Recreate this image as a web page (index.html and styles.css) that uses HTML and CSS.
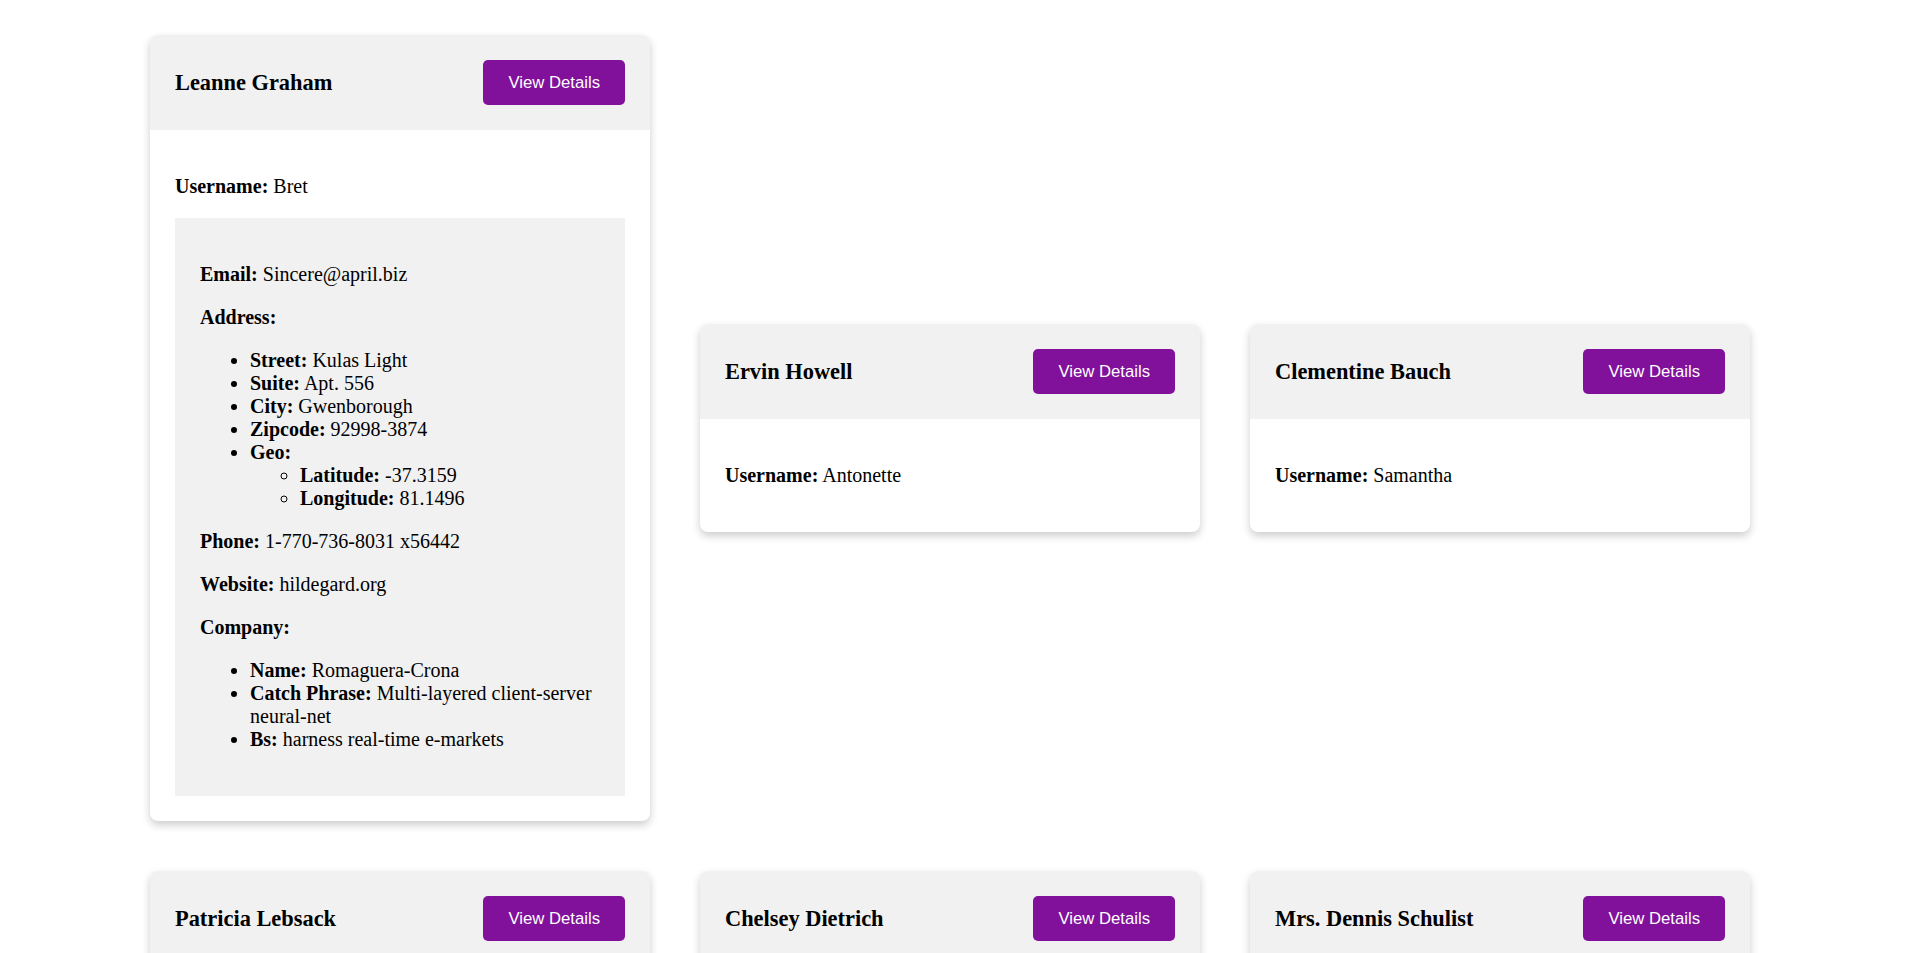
FILE: index.html
```html
<!DOCTYPE html>
<html lang="en">
<head>
<meta charset="utf-8">
<title>Users</title>
<link rel="stylesheet" href="styles.css">
</head>
<body>
<main class="grid">
  <div class="card">
    <div class="card-header"><h3 class="name">Leanne Graham</h3><button class="btn">View Details</button></div>
    <div class="card-body">
      <p><strong>Username:</strong> Bret</p>
      <div class="details">
        <p><strong>Email:</strong> Sincere@april.biz</p>
        <p><strong>Address:</strong></p>
        <ul>
          <li><strong>Street:</strong> Kulas Light</li>
          <li><strong>Suite:</strong> Apt. 556</li>
          <li><strong>City:</strong> Gwenborough</li>
          <li><strong>Zipcode:</strong> 92998-3874</li>
          <li><strong>Geo:</strong>
            <ul>
              <li><strong>Latitude:</strong> -37.3159</li>
              <li><strong>Longitude:</strong> 81.1496</li>
            </ul>
          </li>
        </ul>
        <p><strong>Phone:</strong> 1-770-736-8031 x56442</p>
        <p><strong>Website:</strong> hildegard.org</p>
        <p><strong>Company:</strong></p>
        <ul>
          <li><strong>Name:</strong> Romaguera-Crona</li>
          <li><strong>Catch Phrase:</strong> Multi-layered client-server neural-net</li>
          <li><strong>Bs:</strong> harness real-time e-markets</li>
        </ul>
      </div>
    </div>
  </div>
  <div class="card">
    <div class="card-header"><h3 class="name">Ervin Howell</h3><button class="btn">View Details</button></div>
    <div class="card-body"><p><strong>Username:</strong> Antonette</p></div>
  </div>
  <div class="card">
    <div class="card-header"><h3 class="name">Clementine Bauch</h3><button class="btn">View Details</button></div>
    <div class="card-body"><p><strong>Username:</strong> Samantha</p></div>
  </div>
  <div class="card">
    <div class="card-header"><h3 class="name">Patricia Lebsack</h3><button class="btn">View Details</button></div>
    <div class="card-body"><p><strong>Username:</strong> Karianne</p></div>
  </div>
  <div class="card">
    <div class="card-header"><h3 class="name">Chelsey Dietrich</h3><button class="btn">View Details</button></div>
    <div class="card-body"><p><strong>Username:</strong> Kamren</p></div>
  </div>
  <div class="card">
    <div class="card-header"><h3 class="name">Mrs. Dennis Schulist</h3><button class="btn">View Details</button></div>
    <div class="card-body"><p><strong>Username:</strong> Leopoldo_Corkery</p></div>
  </div>
  <div class="card">
    <div class="card-header"><h3 class="name">Kurtis Weissnat</h3><button class="btn">View Details</button></div>
    <div class="card-body"><p><strong>Username:</strong> Elwyn.Skiles</p></div>
  </div>
  <div class="card">
    <div class="card-header"><h3 class="name">Nicholas Runolfsdottir V</h3><button class="btn">View Details</button></div>
    <div class="card-body"><p><strong>Username:</strong> Maxime_Nienow</p></div>
  </div>
  <div class="card">
    <div class="card-header"><h3 class="name">Glenna Reichert</h3><button class="btn">View Details</button></div>
    <div class="card-body"><p><strong>Username:</strong> Delphine</p></div>
  </div>
  <div class="card">
    <div class="card-header"><h3 class="name">Clementina DuBuque</h3><button class="btn">View Details</button></div>
    <div class="card-body"><p><strong>Username:</strong> Moriah.Stanton</p></div>
  </div>
</main>
</body>
</html>
```
FILE: styles.css
```css
html, body {
  margin: 0;
  padding: 0;
  background: #ffffff;
}

body {
  font-family: "Liberation Serif", "Times New Roman", serif;
  font-size: 20px;
  color: #000000;
}

.grid {
  display: grid;
  grid-template-columns: repeat(3, 500px);
  column-gap: 50px;
  row-gap: 50px;
  align-items: center;
  padding: 35px 0 50px 150px;
}

.card {
  background: #ffffff;
  border-radius: 8px;
  overflow: hidden;
  box-shadow: 0 4px 8px rgba(0, 0, 0, 0.2);
}

.card-header {
  display: flex;
  justify-content: space-between;
  align-items: center;
  padding: 25px;
  background: #f1f1f1;
}

.name {
  margin: 0;
  font-size: 22.4px;
  line-height: 26px;
  font-weight: bold;
}

.btn {
  font-family: "Liberation Sans", Arial, sans-serif;
  font-size: 16.7px;
  line-height: 21px;
  padding: 12px 25px;
  color: #ffffff;
  background: #81109b;
  border: none;
  border-radius: 5px;
  cursor: pointer;
}

.card-body {
  padding: 25px;
}

.card-body p {
  margin: 20px 0;
}

.details {
  background: #f1f1f1;
  padding: 25px;
}

.details ul {
  margin: 20px 0;
  padding-left: 50px;
}

.details ul ul {
  margin: 0;
}
```
